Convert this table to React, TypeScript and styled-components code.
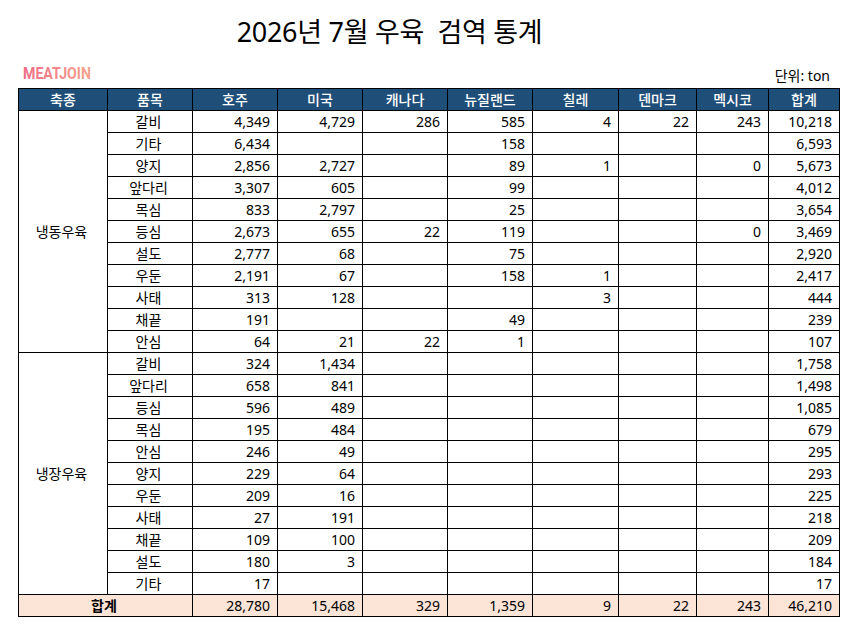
import React from "react";
import styled, { createGlobalStyle } from "styled-components";

const GlobalStyle = createGlobalStyle`
  html, body {
    margin: 0;
    padding: 0;
    background: #ffffff;
  }
  body {
    font-family: "Noto Sans", "Noto Sans CJK KR", sans-serif;
    color: #000000;
  }
`;

type Row = { item: string; values: (string | null)[] };

const countries = ["호주", "미국", "캐나다", "뉴질랜드", "칠레", "덴마크", "멕시코", "합계"];
const colWidths = [89, 85, 85, 85, 85, 85, 86, 78, 72, 71];

const frozen: Row[] = [
  { item: "갈비", values: ["4,349", "4,729", "286", "585", "4", "22", "243", "10,218"] },
  { item: "기타", values: ["6,434", null, null, "158", null, null, null, "6,593"] },
  { item: "양지", values: ["2,856", "2,727", null, "89", "1", null, "0", "5,673"] },
  { item: "앞다리", values: ["3,307", "605", null, "99", null, null, null, "4,012"] },
  { item: "목심", values: ["833", "2,797", null, "25", null, null, null, "3,654"] },
  { item: "등심", values: ["2,673", "655", "22", "119", null, null, "0", "3,469"] },
  { item: "설도", values: ["2,777", "68", null, "75", null, null, null, "2,920"] },
  { item: "우둔", values: ["2,191", "67", null, "158", "1", null, null, "2,417"] },
  { item: "사태", values: ["313", "128", null, null, "3", null, null, "444"] },
  { item: "채끝", values: ["191", null, null, "49", null, null, null, "239"] },
  { item: "안심", values: ["64", "21", "22", "1", null, null, null, "107"] },
];

const chilled: Row[] = [
  { item: "갈비", values: ["324", "1,434", null, null, null, null, null, "1,758"] },
  { item: "앞다리", values: ["658", "841", null, null, null, null, null, "1,498"] },
  { item: "등심", values: ["596", "489", null, null, null, null, null, "1,085"] },
  { item: "목심", values: ["195", "484", null, null, null, null, null, "679"] },
  { item: "안심", values: ["246", "49", null, null, null, null, null, "295"] },
  { item: "양지", values: ["229", "64", null, null, null, null, null, "293"] },
  { item: "우둔", values: ["209", "16", null, null, null, null, null, "225"] },
  { item: "사태", values: ["27", "191", null, null, null, null, null, "218"] },
  { item: "채끝", values: ["109", "100", null, null, null, null, null, "209"] },
  { item: "설도", values: ["180", "3", null, null, null, null, null, "184"] },
  { item: "기타", values: ["17", null, null, null, null, null, null, "17"] },
];

const totals = ["28,780", "15,468", "329", "1,359", "9", "22", "243", "46,210"];

const groups = [
  { name: "냉동우육", rows: frozen },
  { name: "냉장우육", rows: chilled },
];

const Page = styled.div`
  padding-left: 18px;
  width: 821px;
`;

const Title = styled.h1`
  margin: 0;
  padding: 13px 78px 0 0;
  height: 49px;
  text-align: center;
  font-size: 27px;
  font-weight: 400;
  line-height: 38px;
  white-space: pre;
  letter-spacing: -0.3px;
`;

const InfoBar = styled.div`
  display: flex;
  justify-content: space-between;
  align-items: flex-end;
  height: 26px;
  padding: 0 9px 0 5px;
`;

const Logo = styled.svg`
  display: block;
  overflow: visible;
  margin-bottom: 5px;
`;

const Unit = styled.span`
  font-size: 14px;
  line-height: 20px;
  margin-bottom: 2px;
`;

const Table = styled.table`
  border-collapse: collapse;
  table-layout: fixed;
  width: 821px;
  font-size: 14px;
`;

const HeadCell = styled.th`
  height: 21px;
  padding: 0;
  background: #1f4e78;
  color: #ffffff;
  font-weight: 500;
  line-height: 20px;
  border: 1px solid #000000;
  text-align: center;
`;

const Cell = styled.td<{ $align?: "left" | "center" | "right"; $bold?: boolean }>`
  height: 21px;
  padding: 0 7px 0 4px;
  line-height: 20px;
  border: 1px solid #000000;
  text-align: ${(p) => p.$align ?? "right"};
  font-weight: ${(p) => (p.$bold ? 700 : 400)};
  white-space: nowrap;
`;

const TotalRow = styled.tr`
  background: #fce4d6;
`;

function MeatjoinLogo() {
  return (
    <Logo width="68" height="20" viewBox="0 0 68 20">
      <defs>
        <linearGradient id="mjGrad" x1="0" y1="0" x2="1" y2="0">
          <stop offset="0" stopColor="#ef6c86" />
          <stop offset="1" stopColor="#f5a48e" />
        </linearGradient>
      </defs>
      <text
        x="0"
        y="16"
        textLength="68"
        lengthAdjust="spacingAndGlyphs"
        fill="url(#mjGrad)"
        fontFamily="Roboto, 'Noto Sans', sans-serif"
        fontWeight="700"
        fontSize="16.5"
      >
        MEATJOIN
      </text>
    </Logo>
  );
}

export default function App() {
  return (
    <>
      <GlobalStyle />
      <Page>
        <Title>{"2026년 7월 우육  검역 통계"}</Title>
        <InfoBar>
          <MeatjoinLogo />
          <Unit>단위: ton</Unit>
        </InfoBar>
        <Table>
          <colgroup>
            {colWidths.map((w, i) => (
              <col key={i} style={{ width: w }} />
            ))}
          </colgroup>
          <thead>
            <tr>
              <HeadCell>축종</HeadCell>
              <HeadCell>품목</HeadCell>
              {countries.map((c) => (
                <HeadCell key={c}>{c}</HeadCell>
              ))}
            </tr>
          </thead>
          <tbody>
            {groups.map((g) =>
              g.rows.map((r, i) => (
                <tr key={g.name + r.item}>
                  {i === 0 && (
                    <Cell $align="center" rowSpan={g.rows.length}>
                      {g.name}
                    </Cell>
                  )}
                  <Cell $align="center">{r.item}</Cell>
                  {r.values.map((v, j) => (
                    <Cell key={j}>{v ?? ""}</Cell>
                  ))}
                </tr>
              ))
            )}
            <TotalRow>
              <Cell $align="center" $bold colSpan={2}>
                합계
              </Cell>
              {totals.map((v, j) => (
                <Cell key={j}>{v}</Cell>
              ))}
            </TotalRow>
          </tbody>
        </Table>
      </Page>
    </>
  );
}
